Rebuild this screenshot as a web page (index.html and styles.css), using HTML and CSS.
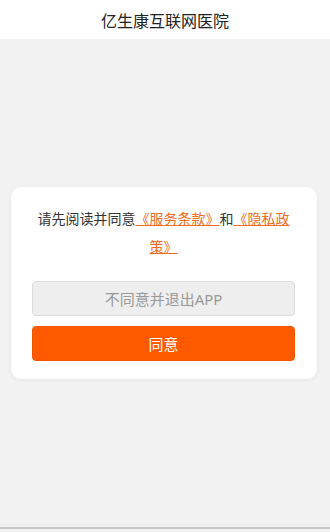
FILE: index.html
```html
<!DOCTYPE html>
<html lang="zh-CN">
<head>
    <meta charset="UTF-8">
    <meta name="viewport" content="width=device-width, initial-scale=1.0">
    <title>亿生康互联网医院</title>
    <link rel="stylesheet" href="styles.css">
</head>
<body>
    <div class="page">
        <header class="nav-bar">亿生康互联网医院</header>
        <main class="content">
            <div class="agree-card">
                <p class="agree-text">请先阅读并同意<a href="#">《服务条款》</a>和<a href="#">《隐私政策》</a></p>
                <button class="btn btn-refuse" type="button">不同意并退出APP</button>
                <button class="btn btn-agree" type="button">同意</button>
            </div>
        </main>
        <div class="bottom-line"></div>
    </div>
</body>
</html>
```

FILE: styles.css
```css
* {
    box-sizing: border-box;
}
html, body {
    margin: 0;
    padding: 0;
}
body {
    font-family: "Noto Sans", "Noto Sans CJK SC", sans-serif;
    background: #f2f2f2;
    color: #333;
}
.page {
    height: 532px;
    display: flex;
    flex-direction: column;
}
.nav-bar {
    height: 39px;
    background: #fff;
    display: flex;
    align-items: center;
    justify-content: center;
    font-size: 16px;
    color: #222;
}
.content {
    flex: 1;
    display: flex;
    align-items: center;
    justify-content: center;
    padding: 2px 13px 0 11px;
}
.agree-card {
    width: 306px;
    background: #fff;
    border-radius: 10px;
    padding: 18px 22px 18px 21px;
    box-shadow: 0 1px 4px rgba(0,0,0,0.05);
}
.agree-text {
    margin: 0 0 20px;
    font-size: 14px;
    line-height: 28px;
    text-align: center;
    color: #333;
}
.agree-text a {
    color: #f26b21;
    text-decoration: underline;
}
.btn {
    display: block;
    width: 100%;
    height: 35px;
    border-radius: 4px;
    font-family: "Noto Sans", "Noto Sans CJK SC", sans-serif;
    font-size: 15px;
    cursor: pointer;
}
.btn-refuse {
    background: #eeeeee;
    border: 1px solid #dddddd;
    color: #999;
    margin-bottom: 10px;
}
.btn-agree {
    background: #ff5a00;
    border: 1px solid #f25500;
    color: #fff;
}
.bottom-line {
    height: 5px;
    margin-bottom: 3px;
    border-top: 1px solid #ececec;
    border-bottom: 2px solid #c8c8c8;
}
```
